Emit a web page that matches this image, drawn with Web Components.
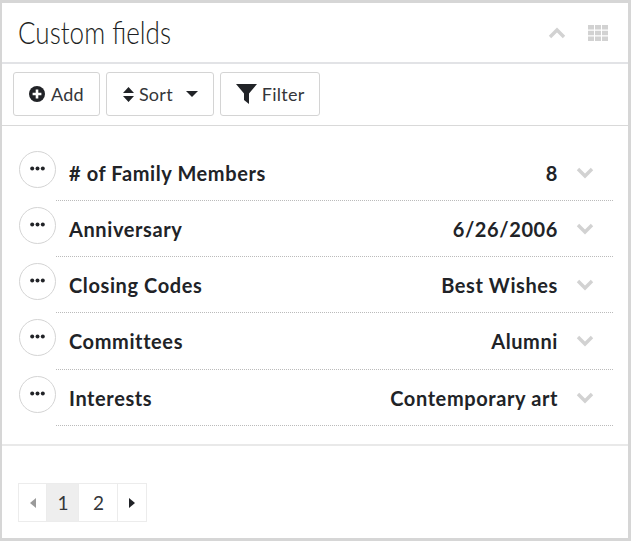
<!DOCTYPE html>
<html>
<head>
<meta charset="utf-8">
<title>Custom fields</title>
<style>
  html, body { margin: 0; padding: 0; background: #fff; }
  body { font-family: "Lato", "Liberation Sans", sans-serif; color: #212327; }
</style>
</head>
<body>
<tile-panel>
  <span slot="title">Custom fields</span>
  <tool-button slot="tools" icon="add">Add</tool-button>
  <tool-button slot="tools" icon="sort" caret>Sort</tool-button>
  <tool-button slot="tools" icon="filter">Filter</tool-button>
  <field-row name="# of Family Members" value="8"></field-row>
  <field-row name="Anniversary" value="6/26/2006"></field-row>
  <field-row name="Closing Codes" value="Best Wishes"></field-row>
  <field-row name="Committees" value="Alumni"></field-row>
  <field-row name="Interests" value="Contemporary art"></field-row>
  <page-bar slot="footer"></page-bar>
</tile-panel>

<script>
// panel with header, toolbar, list and footer
var template_panel = document.createElement("template");
template_panel.innerHTML = `
<style>
  :host { display: block; box-sizing: border-box; width: 631px; height: 541px; border: solid #d6d6d6; border-width: 3px 3px 3px 2px; background: #fff; }
  header { height: 59px; border-bottom: 2px solid #e2e3e6; display: flex; align-items: center; padding: 0 20px 0 16px; }
  h2 { margin: 0; flex: 1; font: 300 31px/1 "Lato", sans-serif; color: #1c1e22; transform: scaleX(.84); transform-origin: left center; white-space: nowrap; }
  .actions { display: flex; align-items: center; gap: 22px; }
  .tools { height: 62px; box-sizing: border-box; padding: 8px 0 0 11px; display: flex; gap: 6px; border-bottom: 1px solid #d9d9d9; }
  .list { height: 320px; box-sizing: border-box; padding-top: 19px; border-bottom: 2px solid #e9e9e9; }
  .foot { padding: 37px 0 0 16px; }
</style>
<header>
  <h2><slot name="title"></slot></h2>
  <div class="actions">
    <svg width="18" height="12" viewBox="0 0 18 12"><path d="M2 10l7-7 7 7" fill="none" stroke="#d2d2d2" stroke-width="3.4"/></svg>
    <svg width="20" height="16" viewBox="0 0 20 16" fill="#d2d2d2"><path d="M0 0h6v4.6H0zM7 0h6v4.6H7zM14 0h6v4.6h-6zM0 5.7h6v4.6H0zM7 5.7h6v4.6H7zM14 5.7h6v4.6h-6zM0 11.4h6V16H0zM7 11.4h6V16H7zM14 11.4h6V16h-6z"/></svg>
  </div>
</header>
<div class="tools"><slot name="tools"></slot></div>
<div class="list"><slot></slot></div>
<div class="foot"><slot name="footer"></slot></div>
`;
class TilePanel extends HTMLElement {
  constructor(){
    super();
    this.attachShadow({mode:"open"});
    this.shadowRoot.appendChild(template_panel.content.cloneNode(true));
  }
}
customElements.define("tile-panel", TilePanel);

// toolbar button
var toolIcons = {
  add: '<svg width="16" height="16" viewBox="0 0 16 16"><circle cx="8" cy="8" r="8" fill="#212327"/><path d="M8 3.6v8.8M3.6 8h8.8" stroke="#fff" stroke-width="2.6"/></svg>',
  sort: '<svg width="11" height="15" viewBox="0 0 11 15" fill="#212327"><path d="M5.5 0L11 6H0zM0 9h11l-5.5 6z"/></svg>',
  filter: '<svg width="21" height="20" viewBox="0 0 21 20" fill="#212327"><path d="M0 0h21l-8 9.5V20l-5-4V9.5z"/></svg>'
};
var template_btn = document.createElement("template");
template_btn.innerHTML = `
<style>
  :host { display: inline-flex; align-items: center; box-sizing: border-box; height: 44px; padding: 0 15px; border: 1px solid #d4d4d4; border-radius: 3px; background: #fff; font: 400 18px "Lato", sans-serif; letter-spacing: .25px; color: #34363a; }
  #icon { display: flex; margin-right: 6px; }
  #caret { display: none; margin-left: 13px; }
  :host([caret]) #caret { display: block; }
  :host([caret]) { padding-left: 16px; }
  :host([icon="filter"]) { padding-right: 14px; }
  :host([icon="sort"]) #icon, :host([icon="filter"]) #icon { margin-right: 5px; }
</style>
<span id="icon"></span><slot></slot>
<svg id="caret" width="12" height="6" viewBox="0 0 12 6" fill="#212327"><path d="M0 0h12L6 6z"/></svg>
`;
class ToolButton extends HTMLElement {
  constructor(){
    super();
    this.attachShadow({mode:"open"});
    this.shadowRoot.appendChild(template_btn.content.cloneNode(true));
  }
  connectedCallback(){
    this.shadowRoot.querySelector("#icon").innerHTML = toolIcons[this.getAttribute("icon")] || "";
  }
}
customElements.define("tool-button", ToolButton);

// one row of the list
var template_row = document.createElement("template");
template_row.innerHTML = `
<style>
  :host { display: flex; height: 56.13px; box-sizing: border-box; padding: 6px 15px 0 17px; }
  .more { flex: none; box-sizing: border-box; width: 37px; height: 37px; border: 1px solid #d4d4d4; border-radius: 50%; display: flex; justify-content: center; padding-top: 14px; }
  .body { flex: 1; display: flex; align-items: flex-start; border-bottom: 1px dotted #bbb; height: 50.13px; box-sizing: border-box; padding: 10px 19px 0 13px; font: 700 20px/24px "Lato", sans-serif; letter-spacing: .6px; color: #212327; }
  .name { flex: 1; }
  .chev { margin: 6px 0 0 18px; }
</style>
<div class="more"><svg width="15" height="5" viewBox="0 0 15 5" fill="#212327"><circle cx="2.2" cy="2.5" r="2"/><circle cx="7.5" cy="2.5" r="2"/><circle cx="12.8" cy="2.5" r="2"/></svg></div>
<div class="body">
  <span class="name"></span><span class="value"></span>
  <svg class="chev" width="18" height="12" viewBox="0 0 18 12"><path d="M2 2l7 7 7-7" fill="none" stroke="#d2d2d2" stroke-width="3.4"/></svg>
</div>
`;
class FieldRow extends HTMLElement {
  constructor(){
    super();
    this.attachShadow({mode:"open"});
    this.shadowRoot.appendChild(template_row.content.cloneNode(true));
  }
  connectedCallback(){
    this.shadowRoot.querySelector(".name").textContent = this.getAttribute("name");
    this.shadowRoot.querySelector(".value").textContent = this.getAttribute("value");
  }
}
customElements.define("field-row", FieldRow);

// pagination
var template_pager = document.createElement("template");
template_pager.innerHTML = `
<style>
  :host { display: inline-flex; box-sizing: border-box; height: 39px; border: 1px solid #ececec; background: #fff; font: 400 19px "Lato", sans-serif; color: #34363a; }
  div { display: flex; align-items: center; justify-content: center; box-sizing: border-box; border-right: 1px solid #ececec; }
  div:last-child { border-right: 0; }
  .arrow { width: 28px; }
  .one { width: 32px; padding-left: 1px; background: #eee; }
  .two { width: 39px; padding-left: 1px; }
</style>
<div class="arrow"><svg width="6" height="10" viewBox="0 0 6 10" fill="#9a9a9a"><path d="M6 0v10L0 5z"/></svg></div>
<div class="one">1</div>
<div class="two">2</div>
<div class="arrow"><svg width="6" height="10" viewBox="0 0 6 10" fill="#212327"><path d="M0 0v10l6-5z"/></svg></div>
`;
class PageBar extends HTMLElement {
  constructor(){
    super();
    this.attachShadow({mode:"open"});
    this.shadowRoot.appendChild(template_pager.content.cloneNode(true));
  }
}
customElements.define("page-bar", PageBar);
</script>
</body>
</html>
